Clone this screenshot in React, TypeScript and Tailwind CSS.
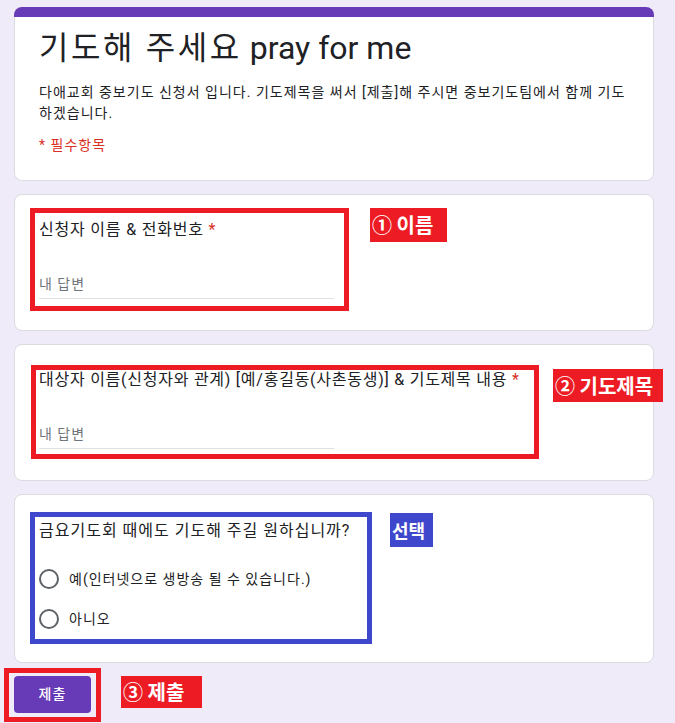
import React from "react";

const Annot = ({ className, children }: { className: string; children: React.ReactNode }) => (
  <div
    className={
      "absolute flex items-center pl-[2px] text-white font-bold whitespace-nowrap font-['Noto_Sans_CJK_KR',sans-serif] " +
      className
    }
  >
    {children}
  </div>
);

const Radio = ({ label }: { label: string }) => (
  <div className="flex h-[40px] items-center gap-[10px]">
    <div className="h-[20px] w-[20px] rounded-full border-2 border-[#5f6368]" />
    <span className="text-[14px] leading-[20px] tracking-[1px] text-[#202124]">{label}</span>
  </div>
);

export default function App() {
  return (
    <div className="min-h-[723px] bg-[#f0ebf8] px-[14px] pt-[7px] font-['Roboto','Noto_Sans_CJK_KR',sans-serif] text-[#202124]">
      <div className="flex w-[640px] flex-col gap-[13px]">
        {/* Header card */}
        <div className="overflow-hidden rounded-lg">
          <div className="h-[10px] bg-[#673ab7]" />
          <div className="rounded-b-lg border-x border-b border-[#dadce0] bg-white px-6 pb-[25px] pt-[11px]">
            <div className="text-[32px] leading-[40px]">
              <span className="tracking-[2.6px]">기도해 주세요</span> pray for me
            </div>
            <div className="mt-[14px] text-[14px] leading-[21px] tracking-[1px]">
              <span className="whitespace-nowrap">
                다애교회 중보기도 신청서 입니다. 기도제목을 써서 [제출]해 주시면 중보기도팀에서 함께 기도
              </span>
              <br />
              하겠습니다.
            </div>
            <div className="mt-[11px] text-[14px] leading-[20px] tracking-[1px] text-[#d93025]">* 필수항목</div>
          </div>
        </div>

        {/* Question 1 */}
        <div className="relative rounded-lg border border-[#dadce0] bg-white px-6 pb-[31px] pt-[23px]">
          <div className="text-[16px] leading-[24px] tracking-[0.8px]">
            신청자 이름 &amp; 전화번호 <span className="text-[#d93025]">*</span>
          </div>
          <div className="mt-[31px] w-1/2 border-b border-[#e0e0e0] pb-[3px] text-[14px] leading-[22px] tracking-[1px] text-[#70757a]">
            내 답변
          </div>
          <div className="absolute left-[15px] top-[13px] h-[103px] w-[319px] border-[5px] border-[#ed1c24]" />
          <Annot className="left-[355px] top-[13px] h-[34px] w-[77px] bg-[#ed1c24] text-[20px] leading-[24px]">
            ① 이름
          </Annot>
        </div>

        {/* Question 2 */}
        <div className="relative rounded-lg border border-[#dadce0] bg-white px-6 pb-[31px] pt-[23px]">
          <div className="text-[16px] leading-[24px] tracking-[0.75px]">
            대상자 이름(신청자와 관계) [예/홍길동(사촌동생)] &amp; 기도제목 내용{" "}
            <span className="text-[#d93025]">*</span>
          </div>
          <div className="mt-[31px] w-1/2 border-b border-[#e0e0e0] pb-[3px] text-[14px] leading-[22px] tracking-[1px] text-[#70757a]">
            내 답변
          </div>
          <div className="absolute left-[16px] top-[20px] h-[94px] w-[508px] border-[5px] border-[#ed1c24]" />
          <Annot className="left-[538px] top-[24px] h-[33px] w-[110px] bg-[#ed1c24] text-[20px] leading-[24px]">
            ② 기도제목
          </Annot>
        </div>

        {/* Question 3 */}
        <div className="relative rounded-lg border border-[#dadce0] bg-white px-6 pb-[23px] pt-[24px]">
          <div className="text-[16px] leading-[24px] tracking-[1px]">금요기도회 때에도 기도해 주길 원하십니까?</div>
          <div className="mt-[16px] flex flex-col">
            <Radio label="예(인터넷으로 생방송 될 수 있습니다.)" />
            <Radio label="아니오" />
          </div>
          <div className="absolute left-[15px] top-[17px] h-[132px] w-[342px] border-[5px] border-[#3f48cc]" />
          <Annot className="left-[375px] top-[18px] h-[34px] w-[43px] bg-[#3f48cc] text-[18px] leading-[22px]">
            선택
          </Annot>
        </div>

        {/* Submit */}
        <div className="relative h-[37px]">
          <button className="h-[37px] w-[77px] rounded bg-[#673ab7] text-[14px] font-medium tracking-[1px] text-white">
            제출
          </button>
          <div className="absolute left-[-10px] top-[-8px] h-[54px] w-[97px] border-[5px] border-[#ed1c24]" />
          <Annot className="left-[107px] top-0 h-[32px] w-[81px] bg-[#ed1c24] text-[20px] leading-[24px]">
            ③ 제출
          </Annot>
        </div>
      </div>
    </div>
  );
}
